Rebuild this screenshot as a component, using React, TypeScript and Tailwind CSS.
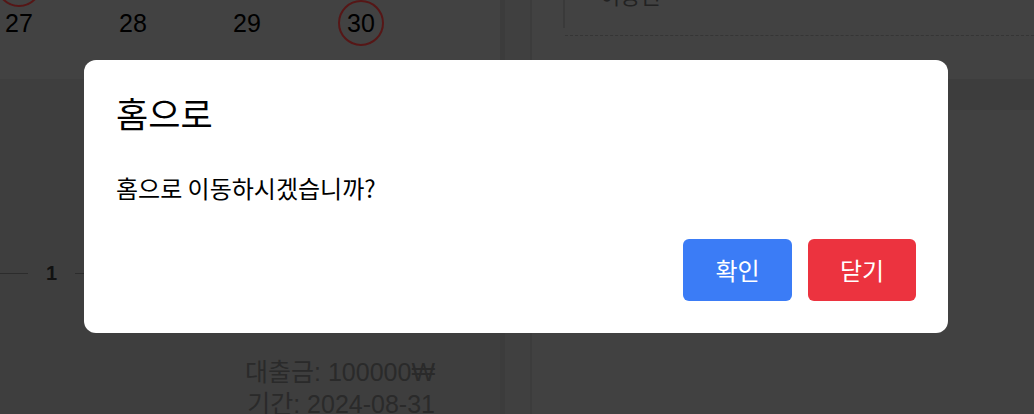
import React from 'react';

const days = ['27', '28', '29', '30'];

const App: React.FC = () => {
  return (
    <div className="relative h-[414px] w-[1034px] overflow-hidden bg-[#424242] font-['Liberation_Sans','Noto_Sans_CJK_KR',sans-serif]">
      {/* dimmed page behind the modal */}
      <div className="flex h-full">
        {/* left panel: calendar + chart */}
        <div className="flex w-[500px] flex-col">
          <div className="h-[79px] shrink-0 overflow-hidden">
            {/* previous week row, mostly scrolled away */}
            <div className="flex h-0 items-start">
              <div className="ml-[-4px] h-[46px] w-[46px] shrink-0 -translate-y-[39px] rounded-full border-2 border-[#561616]" />
            </div>
            <div className="-ml-[38px] flex">
              {days.map((d) => (
                <div key={d} className="flex w-[114px] justify-center">
                  <span
                    className={
                      d === '30'
                        ? 'flex h-[46px] w-[46px] items-center justify-center rounded-full border-2 border-[#561616] text-[25px] leading-none text-black'
                        : 'flex h-[46px] items-center text-[25px] leading-none text-black'
                    }
                  >
                    {d}
                  </span>
                </div>
              ))}
            </div>
          </div>
          <div className="flex-1 bg-[#3e3e3e]">
            <div className="mt-[184px] flex items-center">
              <div className="h-px w-[28px] bg-[#2c2c2c]" />
              <span className="px-[18px] text-[20px] font-bold leading-none text-[#111]">1</span>
              <div className="h-px flex-1 bg-[#2c2c2c]" />
            </div>
            <div className="mt-[73px] pr-[65px] text-right text-[25px] leading-[32px] text-[#2a2a2a]">
              <p>대출금: 100000₩</p>
              <p>기간: 2024-08-31</p>
            </div>
          </div>
        </div>

        {/* gutter */}
        <div className="w-[32px] border-l-[5px] border-r-2 border-[#3c3c3c] bg-[#404040]" />

        {/* right panel */}
        <div className="flex flex-1 flex-col">
          <div className="h-[79px] shrink-0 pl-[31px]">
            <div className="h-[46px] border-l-2 border-[#3a3a3a]">
              <div className="-mt-[18px] h-[54px] border-b border-dashed border-[#353535] pl-[35px] font-['Noto_Sans_CJK_KR',sans-serif] text-[22px] leading-[24px] text-[#222]">
                이용권
              </div>
            </div>
          </div>
          <div className="h-[31px] shrink-0 bg-[#3d3d3d]" />
          <div className="flex-1 bg-[#414141]" />
        </div>
      </div>

      {/* modal */}
      <div className="absolute inset-0 flex items-start pl-[84px] pt-[60px]">
        <div className="flex h-[273px] w-[864px] flex-col rounded-xl bg-white p-8 font-['Noto_Sans_CJK_KR',sans-serif]">
          <h2 className="text-[35px] leading-[42px] text-black">홈으로</h2>
          <p className="mt-[38px] text-[24px] leading-[32px] text-black">홈으로 이동하시겠습니까?</p>
          <div className="mt-auto flex justify-end gap-4">
            <button className="h-[62px] w-[109px] rounded-md bg-[#3b7cf6] text-[24px] text-white">확인</button>
            <button className="h-[62px] w-[108px] rounded-md bg-[#ec333f] text-[24px] text-white">닫기</button>
          </div>
        </div>
      </div>
    </div>
  );
};

export default App;
